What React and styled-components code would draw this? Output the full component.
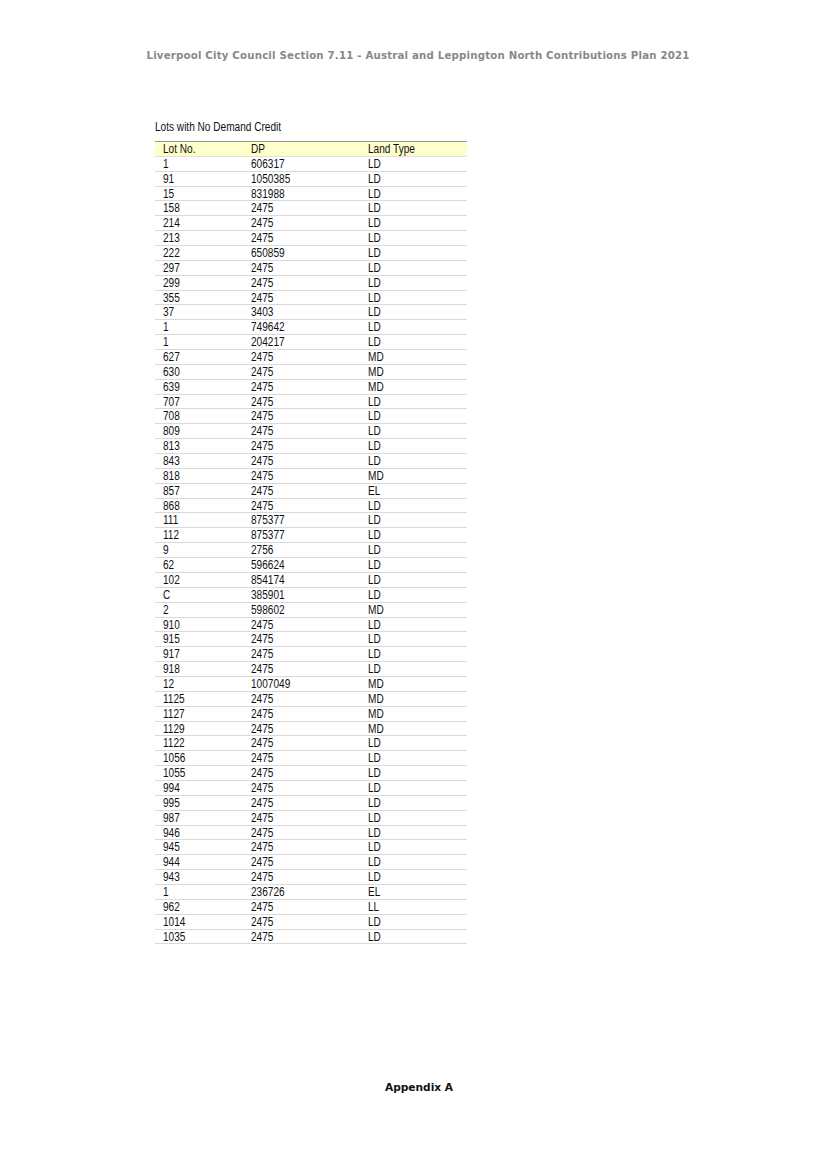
import styled, { createGlobalStyle } from "styled-components";

const GlobalStyle = createGlobalStyle`
  html, body {
    margin: 0;
    padding: 0;
    background: #ffffff;
  }
`;

const rows = [
  ["1", "606317", "LD"],
  ["91", "1050385", "LD"],
  ["15", "831988", "LD"],
  ["158", "2475", "LD"],
  ["214", "2475", "LD"],
  ["213", "2475", "LD"],
  ["222", "650859", "LD"],
  ["297", "2475", "LD"],
  ["299", "2475", "LD"],
  ["355", "2475", "LD"],
  ["37", "3403", "LD"],
  ["1", "749642", "LD"],
  ["1", "204217", "LD"],
  ["627", "2475", "MD"],
  ["630", "2475", "MD"],
  ["639", "2475", "MD"],
  ["707", "2475", "LD"],
  ["708", "2475", "LD"],
  ["809", "2475", "LD"],
  ["813", "2475", "LD"],
  ["843", "2475", "LD"],
  ["818", "2475", "MD"],
  ["857", "2475", "EL"],
  ["868", "2475", "LD"],
  ["111", "875377", "LD"],
  ["112", "875377", "LD"],
  ["9", "2756", "LD"],
  ["62", "596624", "LD"],
  ["102", "854174", "LD"],
  ["C", "385901", "LD"],
  ["2", "598602", "MD"],
  ["910", "2475", "LD"],
  ["915", "2475", "LD"],
  ["917", "2475", "LD"],
  ["918", "2475", "LD"],
  ["12", "1007049", "MD"],
  ["1125", "2475", "MD"],
  ["1127", "2475", "MD"],
  ["1129", "2475", "MD"],
  ["1122", "2475", "LD"],
  ["1056", "2475", "LD"],
  ["1055", "2475", "LD"],
  ["994", "2475", "LD"],
  ["995", "2475", "LD"],
  ["987", "2475", "LD"],
  ["946", "2475", "LD"],
  ["945", "2475", "LD"],
  ["944", "2475", "LD"],
  ["943", "2475", "LD"],
  ["1", "236726", "EL"],
  ["962", "2475", "LL"],
  ["1014", "2475", "LD"],
  ["1035", "2475", "LD"],
];

export default function App() {
  return (
    <>
      <GlobalStyle />
      <Page>
        <RunningHead>
          Liverpool City Council Section 7.11 - Austral and Leppington North
          Contributions Plan 2021
        </RunningHead>
        <Content>
          <Caption>
            <Narrow>Lots with No Demand Credit</Narrow>
          </Caption>
          <Table>
            <HeadRow>
              <Cell><Narrow>Lot No.</Narrow></Cell>
              <Cell><Narrow>DP</Narrow></Cell>
              <Cell><Narrow>Land Type</Narrow></Cell>
            </HeadRow>
            {rows.map(([lot, dp, type], i) => (
              <Row key={i}>
                <Cell><Narrow>{lot}</Narrow></Cell>
                <Cell><Narrow>{dp}</Narrow></Cell>
                <Cell><Narrow>{type}</Narrow></Cell>
              </Row>
            ))}
          </Table>
        </Content>
        <Footer>Appendix A</Footer>
      </Page>
    </>
  );
}

const Page = styled.div`
  width: 816px;
  height: 1155px;
  display: flex;
  flex-direction: column;
  align-items: center;
  box-sizing: border-box;
  padding-top: 49px;
  background: #ffffff;
`;

const RunningHead = styled.div`
  font-family: "DejaVu Sans", Verdana, sans-serif;
  font-weight: bold;
  font-size: 10.2px;
  color: #888888;
  letter-spacing: 0.2px;
  line-height: 14px;
  white-space: nowrap;
  margin-left: 20px;
`;

const Content = styled.div`
  align-self: flex-start;
  margin-left: 155px;
  margin-top: 57px;
  display: flex;
  flex-direction: column;
`;

/* Arial Narrow look: Liberation Sans squeezed horizontally */
const Narrow = styled.span`
  display: inline-block;
  transform: scaleX(0.84);
  transform-origin: left center;
  white-space: nowrap;
`;

const Caption = styled.div`
  font-family: "Liberation Sans", Arial, sans-serif;
  font-size: 12px;
  color: #111111;
  line-height: 14px;
  margin-bottom: 7px;
`;

const Table = styled.div`
  width: 312px;
  border-top: 1px solid #9a9a9a;
  display: flex;
  flex-direction: column;
`;

const Row = styled.div`
  display: grid;
  grid-template-columns: 88px 117px 1fr;
  height: 13.87px;
  border-bottom: 1px solid #d9d9d9;
  padding-left: 8px;
  font-family: "Liberation Sans", Arial, sans-serif;
  font-size: 12px;
  line-height: 15px;
  color: #111111;
`;

const HeadRow = styled(Row)`
  background: #ffffcc;
  border-bottom-color: #e2e2e2;
`;

const Cell = styled.div`
  white-space: nowrap;
  overflow: hidden;
`;

const Footer = styled.div`
  margin-top: auto;
  margin-bottom: 61px;
  margin-left: 22px;
  font-family: "DejaVu Sans", Verdana, sans-serif;
  font-weight: bold;
  font-size: 10.6px;
  color: #111111;
  line-height: 14px;
`;
